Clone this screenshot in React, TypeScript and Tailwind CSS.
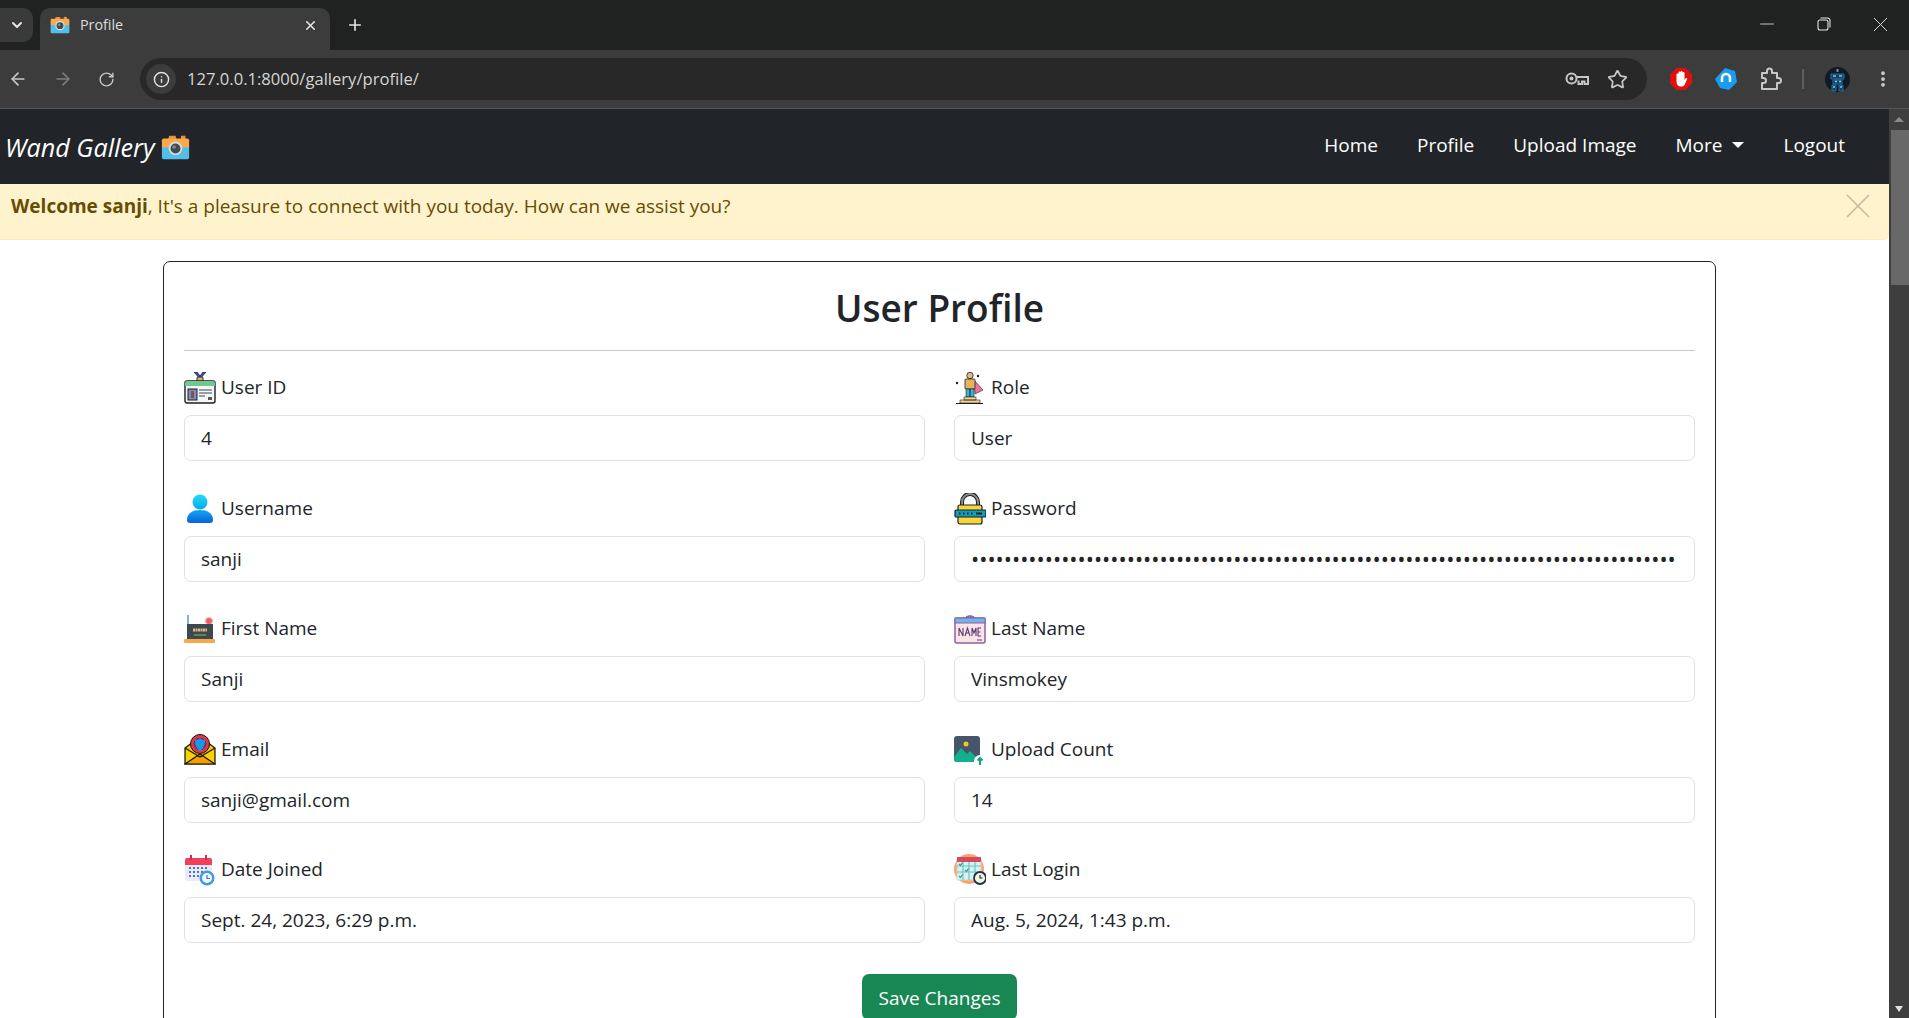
import { ArrowLeft, ArrowRight, ChevronDown, EllipsisVertical, Info, Minus, Plus, RotateCw, Star, X } from "lucide-react";
import type { ReactNode } from "react";

const font = { fontFamily: '"Open Sans", "Noto Sans", sans-serif' };

const CameraIcon = ({ size }: { size: number }) => (
  <svg width={size} height={size} viewBox="0 0 32 32">
    <path d="M9 3h7l1 4H8z" fill="#e8923a" />
    <path d="M22 3h5v4h-5z" fill="#e8923a" />
    <rect x="1" y="6" width="30" height="12" rx="2" fill="#f9a94b" />
    <path d="M1 16h30v11a2 2 0 0 1-2 2H3a2 2 0 0 1-2-2z" fill="#55bdea" />
    <circle cx="16" cy="17" r="7.500" fill="#d5dde0" />
    <circle cx="16" cy="17" r="5.500" fill="#3f4a52" />
    <circle cx="14.500" cy="15.500" r="2" fill="#7d8a93" />
  </svg>
);

const IdIcon = () => (
  <svg width="32" height="32" viewBox="0 0 32 32">
    <path d="M10 0l6 7 6-7h-3l-3 4-3-4z" fill="#3f51a5" stroke="#1d2450" strokeWidth="0.8" />
    <rect x="13" y="5" width="6" height="5" rx="1" fill="#e5b64a" stroke="#1d2450" />
    <rect x="1" y="9" width="30" height="22" rx="2" fill="#f4f6f8" stroke="#1c1f26" strokeWidth="1.400" />
    <path d="M1 14v-3a2 2 0 0 1 2-2h26a2 2 0 0 1 2 2v3z" fill="#6ec88f" />
    <rect x="4" y="17" width="9" height="11" fill="#7d8fc0" stroke="#1c1f26" />
    <rect x="7" y="19" width="3" height="7" fill="#8a4f3c" />
    <path d="M15 18h13M15 21h13M15 24h6" stroke="#7a808a" strokeWidth="1.500" />
    <rect x="24" y="25" width="4" height="3" fill="#555" />
  </svg>
);

const UserIcon = () => (
  <svg width="32" height="32" viewBox="0 0 32 32">
    <defs>
      <linearGradient id="userHead" x1="0" y1="0" x2="0" y2="1">
        <stop offset="0" stopColor="#1fdcf7" />
        <stop offset="1" stopColor="#0aa6ee" />
      </linearGradient>
      <linearGradient id="userBody" x1="0" y1="0" x2="0" y2="1">
        <stop offset="0" stopColor="#12a5f0" />
        <stop offset="1" stopColor="#0a62dc" />
      </linearGradient>
    </defs>
    <circle cx="16" cy="9" r="7.500" fill="url(#userHead)" />
    <path d="M3 27c0-7 6-10 13-10s13 3 13 10c0 2-1 3-3 3H6c-2 0-3-1-3-3z" fill="url(#userBody)" />
  </svg>
);

const HeroIcon = () => (
  <svg width="32" height="32" viewBox="0 0 32 32">
    <path d="M20 8l9 10-8 4z" fill="#f2709c" stroke="#1c1f26" strokeWidth="0.600" />
    <circle cx="16" cy="3.500" r="3.200" fill="#e8b48c" stroke="#1c1f26" strokeWidth="0.800" />
    <rect x="11" y="7" width="10" height="10" rx="1" fill="#e9b35c" stroke="#1c1f26" strokeWidth="0.800" />
    <path d="M12 17h4v8h-4zM16 17h4v8h-4z" fill="#39b3d8" stroke="#1c1f26" strokeWidth="0.600" />
    <path d="M10 25h12v3H10zM6 28h20v3H6z" fill="#f6d28e" stroke="#1c1f26" strokeWidth="0.600" />
    <path d="M2 31.500h27" stroke="#1c1f26" strokeWidth="1" />
    <circle cx="3" cy="11" r="1.200" fill="#1c1f26" />
    <circle cx="24" cy="4" r="1.200" fill="#1c1f26" />
  </svg>
);

const LockIcon = () => (
  <svg width="32" height="32" viewBox="0 0 32 32">
    <path d="M8 14V9a8 8 0 0 1 16 0v5" fill="none" stroke="#1c1f26" strokeWidth="4" />
    <path d="M8 14V9a8 8 0 0 1 16 0v5" fill="none" stroke="#8d8d8d" strokeWidth="2" />
    <rect x="4" y="12" width="24" height="19" rx="2" fill="#f7d63a" stroke="#1c1f26" strokeWidth="1.200" />
    <rect x="1" y="17" width="31" height="7" rx="1" fill="#119fb8" stroke="#1c1f26" strokeWidth="1.200" />
    <path d="M5 20.500h1.500M9 20.500h1.500M13 20.500h1.500M17 20.500h1.500M22 20.500h6" stroke="#10252b" strokeWidth="2" />
  </svg>
);

const NameBoardIcon = () => (
  <svg width="32" height="32" viewBox="0 0 32 32">
    <path d="M3 2h2v12H3z" fill="#7db5dc" />
    <circle cx="25" cy="8" r="3.500" fill="#ef5b68" stroke="#f8b9a8" />
    <rect x="3" y="11" width="26" height="15" fill="#3b4a50" />
    <path d="M9 17h14" stroke="#e3b878" strokeWidth="3" strokeDasharray="2 0.500" />
    <path d="M10 22h12" stroke="#8fb46a" strokeWidth="1" />
    <rect y="26" width="31" height="4" rx="1" fill="#f6a94a" />
  </svg>
);

const NameTagIcon = () => (
  <svg width="32" height="32" viewBox="0 0 32 32">
    <path d="M11 5c2-3 8-3 10 0z" fill="#4f9bd8" stroke="#7d5597" />
    <rect x="1" y="5" width="30" height="25" rx="2" fill="#fde4e4" stroke="#8e5fa5" strokeWidth="1.500" />
    <rect x="1" y="5" width="30" height="5" fill="#6db6e6" stroke="#8e5fa5" />
    <path d="M5 23v-8l4 8v-8M11 23l2.500-8 2.500 8M12 20h3M18 23v-8l2 5 2-5v8M27 15h-3v8h3M24 19h2.500" fill="none" stroke="#5b3a79" strokeWidth="1.100" />
    <path d="M23 27h5" stroke="#5b3a79" />
  </svg>
);

const MailIcon = () => (
  <svg width="32" height="32" viewBox="0 0 32 32">
    <path d="M1 14L16 3l15 11v16H1z" fill="#f7d200" stroke="#111" strokeWidth="1.200" />
    <path d="M1 30l15-10 15 10z" fill="#f59e00" stroke="#111" strokeWidth="1.200" />
    <path d="M1 14l15 9 15-9" fill="none" stroke="#111" strokeWidth="1.200" />
    <circle cx="16" cy="10" r="9.500" fill="#e23745" stroke="#111" strokeWidth="1" />
    <circle cx="16" cy="10" r="6.500" fill="#7e2f52" />
    <path d="M11 6c3 0 4-1 5-2 1 1 2 2 5 2 0 6-2 9-5 11-3-2-5-5-5-11z" fill="#119be8" />
  </svg>
);

const ImageUploadIcon = () => (
  <svg width="32" height="32" viewBox="0 0 32 32">
    <rect x="0" y="2" width="26" height="26" rx="3" fill="#47556b" />
    <circle cx="12" cy="10" r="2.500" fill="#f5c518" />
    <path d="M0 23l7-9 6 6 3-3 10 10v1H3a3 3 0 0 1-3-3z" fill="#12b08c" />
    <circle cx="26" cy="27" r="6" fill="#fff" />
    <path d="M26 31v-7M23.500 26.500l2.500-2.500 2.500 2.500" fill="none" stroke="#12a585" strokeWidth="2" />
  </svg>
);

const CalendarIcon = () => (
  <svg width="32" height="32" viewBox="0 0 32 32">
    <rect x="1" y="4" width="27" height="23" rx="2" fill="#e7ecf8" />
    <path d="M1 11V6a2 2 0 0 1 2-2h23a2 2 0 0 1 2 2v5z" fill="#f2405a" />
    <path d="M7 1v5M22 1v5" stroke="#c9324a" strokeWidth="2" />
    <path d="M5 14h2M9 14h2M13 14h2M17 14h2M21 14h2M5 18h2M9 18h2M13 18h2M17 18h2M5 22h2M9 22h2M13 22h2" stroke="#5e6db5" strokeWidth="2" />
    <circle cx="23" cy="24" r="7.500" fill="#3e9be8" />
    <circle cx="23" cy="24" r="5" fill="#f4f8ff" />
    <path d="M23 21v3.500h3" fill="none" stroke="#3e6fd0" strokeWidth="1.200" />
  </svg>
);

const LoginIcon = () => (
  <svg width="32" height="32" viewBox="0 0 32 32">
    <circle cx="15" cy="15" r="15" fill="#f9a36b" />
    <rect x="3" y="6" width="24" height="20" fill="#d9f0f2" stroke="#e0d2c8" />
    <rect x="3" y="3" width="24" height="5" fill="#d8495c" />
    <path d="M3 12h24M3 18h24M9 8v18M15 8v18M21 8v18" stroke="#68c7c5" strokeWidth="1.200" />
    <path d="M5 10l1.500 1.500 2-3M11 16l1.500 1.500 2-3M5 22l1.500 1.500 2-3" fill="none" stroke="#34a08a" strokeWidth="1.200" />
    <circle cx="26" cy="24" r="6" fill="#f4f6d8" stroke="#1f2f4f" strokeWidth="1.800" />
    <path d="M26 21v3h2.500" fill="none" stroke="#1f2f4f" strokeWidth="1.200" />
  </svg>
);

const Field = ({ icon, label, value, password }: { icon: ReactNode; label: string; value: string; password?: boolean }) => (
  <div>
    <label className="flex h-[43px] items-start gap-[5px] text-[#212529]">
      <span className="shrink-0">{icon}</span>
      <span className="text-[19px] leading-[30px]">{label}</span>
    </label>
    <input
      readOnly
      type={password ? "password" : "text"}
      value={value}
      className={
        password
          ? "block h-[46px] w-full rounded-[7px] border border-[#dee2e6] bg-white px-[16px] text-[21.800px] text-[#212529] outline-none"
          : "block h-[46px] w-full rounded-[7px] border border-[#dee2e6] bg-white px-[16px] text-[19px] text-[#212529] outline-none"
      }
      style={font}
    />
  </div>
);

export default function App() {
  return (
    <div className="flex h-screen w-full flex-col overflow-hidden bg-white" style={font}>
      {/* browser tabs */}
      <div className="flex h-[50px] shrink-0 bg-[#202121]">
        <div className="mt-[8px] ml-[-8px] flex h-[34px] w-[41px] items-center justify-center rounded-[10px] bg-[#3a3a3a] pl-[8px] text-[#e3e3e3]">
          <ChevronDown size={16} strokeWidth={3} />
        </div>
        <div className="mt-[8px] ml-[7px] flex h-[42px] w-[290px] items-center rounded-t-[10px] bg-[#3c3c3c] pr-[12px] pb-[8px] pl-[10px]">
          <CameraIcon size={20} />
          <span className="ml-[10px] flex-1 text-[14.300px] text-[#dedede]">Profile</span>
          <X size={15} strokeWidth={2.500} className="text-[#e3e3e3]" />
        </div>
        <div className="mt-[8px] ml-[16px] flex h-[34px] items-center text-[#e3e3e3]">
          <Plus size={18} strokeWidth={2.200} />
        </div>
        <div className="flex-1" />
        <div className="flex h-[48px] items-center text-[#e3e3e3]">
          <span className="flex w-[57px] justify-center">
            <Minus size={22} strokeWidth={0.900} />
          </span>
          <span className="flex w-[57px] justify-center">
            <svg width="14" height="14" viewBox="0 0 14 14" fill="none" stroke="currentColor" strokeWidth="1.100">
              <rect x="1" y="3" width="10" height="10" rx="2" />
              <path d="M3.500 1h7a2.500 2.500 0 0 1 2.500 2.500v7" />
            </svg>
          </span>
          <span className="flex w-[57px] justify-center">
            <X size={25} strokeWidth={0.900} />
          </span>
        </div>
      </div>
      {/* browser toolbar */}
      <div className="flex h-[59px] shrink-0 items-center border-b border-[#565656] bg-[#3c3c3c]">
        <div className="flex w-[140px] items-center gap-[25px] pl-[8px] text-[#c7c7c7]">
          <ArrowLeft size={20} strokeWidth={2} />
          <ArrowRight size={20} strokeWidth={2} className="text-[#7d7d7d]" />
          <RotateCw size={17} strokeWidth={2} />
        </div>
        <div className="flex h-[42px] w-[1507px] items-center rounded-full bg-[#282828] pl-[6px]">
          <span className="flex h-[30px] w-[30px] items-center justify-center rounded-full bg-[#3c3c3c] text-[#e3e3e3]">
            <Info size={17} strokeWidth={2} />
          </span>
          <span className="ml-[11px] flex-1 pt-[1px] text-[16.600px] text-[#d5d5d5]">127.0.0.1:8000/gallery/profile/</span>
          <svg width="24" height="14" viewBox="0 0 24 14" fill="none" stroke="#c7c7c7" strokeWidth="2" className="mr-[18px]">
            <circle cx="6.500" cy="6.500" r="5" />
            <circle cx="6.500" cy="6.500" r="1" />
            <path d="M11.500 5H23v7h-3.500V9.500H17V12h-3.500V8.500" />
          </svg>
          <Star size={21} strokeWidth={2} className="mr-[19px] text-[#c7c7c7]" />
        </div>
        <div className="ml-[23px] flex items-center">
          <svg width="22" height="22" viewBox="0 0 22 22">
            <path d="M6.500 0h9L22 6.500v9L15.500 22h-9L0 15.500v-9z" fill="#e01010" />
            <path d="M6.500 11V6.500a1 1 0 0 1 2 0V4.500a1 1 0 0 1 2 0V4a1 1 0 0 1 2 0v1a1 1 0 0 1 2 0v7l1-1.500c1-1 2 0 1.500 1L14.500 17c-1 1-2 1.500-3.500 1.500-3 0-4.500-2-4.500-5z" fill="#fff" />
          </svg>
          <svg width="22" height="22" viewBox="0 0 22 22" className="ml-[23px]">
            <path d="M10 0l10 3 2 11-8 8-9-2-5-9z" fill="#1a9cf0" />
            <path d="M7 14V10a4 4 0 0 1 8 0v4" fill="none" stroke="#fff" strokeWidth="2.500" />
          </svg>
          <svg width="22" height="24" viewBox="0 0 22 24" fill="none" stroke="#c7c7c7" strokeWidth="2" className="ml-[23px]">
            <path d="M2 6h5V4a2.500 2.500 0 0 1 5 0v2h5v5h1.500a2.500 2.500 0 0 1 0 5H17v6H2v-6h1.500a2.500 2.500 0 0 0 0-5H2z" strokeLinejoin="round" />
          </svg>
          <div className="ml-[20px] h-[20px] w-[2px] bg-[#5f5f5f]" />
          <svg width="25" height="25" viewBox="0 0 25 25" className="ml-[21px]">
            <circle cx="12.500" cy="12.500" r="12.500" fill="#0e1a26" />
            <path d="M12.500 2v3" stroke="#8a8f96" strokeWidth="2" />
            <path d="M6 7h13v5H6zM8 13h9v4H8zM7 18h4v6H7zM14 18h4v6h-4z" stroke="#2a6f9e" strokeWidth="1" fill="#17405f" />
            <path d="M8 9h3M14 9h3M10 14.500h2M14 14.500h2M8 20h2M15 20h2" stroke="#6fd0f8" strokeWidth="1.600" />
          </svg>
          <EllipsisVertical size={20} strokeWidth={2.500} className="ml-[23px] text-[#d0d0d0]" />
        </div>
      </div>

      <div className="flex min-h-0 flex-1">
        <main className="min-w-0 flex-1 overflow-hidden">
          {/* site navbar */}
          <nav className="flex h-[75px] items-center justify-between bg-[#212529] pr-[44px] pl-[5px] text-white">
            <a className="flex items-center gap-[6px] pt-[2px] text-[25.200px] italic">
              Wand Gallery
              <CameraIcon size={29} />
            </a>
            <ul className="flex items-center gap-[39px] pb-[3px] text-[19px]">
              <li>Home</li>
              <li>Profile</li>
              <li>Upload Image</li>
              <li className="flex items-center gap-[10px]">
                More
                <span className="h-0 w-0 border-x-[6px] border-t-[6px] border-x-transparent border-t-white" />
              </li>
              <li>Logout</li>
            </ul>
          </nav>

          <div className="flex h-[56px] items-center justify-between rounded-br-[6px] border-b border-[#ffecb5] bg-[#fff3cd] pr-[10px] pb-[10px] pl-[11px] text-[19px] text-[#664d03]">
            <p>
              <strong className="font-bold">Welcome sanji</strong>, It's a pleasure to connect with you today. How can we assist you?
            </p>
            <X size={42} strokeWidth={1} className="mt-[-4px] mb-[-2px] text-[#c7bc9e]" />
          </div>

          <section className="mt-[21px] ml-[163px] w-[1553px] rounded-[7px] border border-[#212529] px-[20px] pb-[60px]">
            <h1 className="mt-[20px] text-center text-[37px] leading-[52px] font-semibold text-[#212529]">User Profile</h1>
            <hr className="mt-[16px] border-[#c9c9c9]" />
            <div className="mt-[21px] grid grid-cols-2 gap-x-[29px] gap-y-[31.600px]">
              <Field icon={<IdIcon />} label="User ID" value="4" />
              <Field icon={<HeroIcon />} label="Role" value="User" />
              <Field icon={<UserIcon />} label="Username" value="sanji" />
              <Field icon={<LockIcon />} label="Password" value={"x".repeat(86)} password />
              <Field icon={<NameBoardIcon />} label="First Name" value="Sanji" />
              <Field icon={<NameTagIcon />} label="Last Name" value="Vinsmokey" />
              <Field icon={<MailIcon />} label="Email" value="sanji@gmail.com" />
              <Field icon={<ImageUploadIcon />} label="Upload Count" value="14" />
              <Field icon={<CalendarIcon />} label="Date Joined" value="Sept. 24, 2023, 6:29 p.m." />
              <Field icon={<LoginIcon />} label="Last Login" value="Aug. 5, 2024, 1:43 p.m." />
            </div>
            <div className="mt-[31px] flex justify-center">
              <button type="button" className="h-[46px] w-[155px] rounded-[7px] bg-[#198754] pt-[2px] text-[19px] text-white">
                Save Changes
              </button>
            </div>
          </section>
        </main>

        {/* scrollbar */}
        <div className="flex w-[20px] shrink-0 flex-col items-center bg-[#3e3e3e]">
          <span className="mt-[8px] h-0 w-0 border-x-[5px] border-b-[5px] border-x-transparent border-b-[#8a8a8a]" />
          <div className="mt-[8px] h-[155px] w-[18px] self-end bg-[#686868]" />
          <div className="flex-1" />
          <span className="mb-[6px] h-0 w-0 border-x-[4px] border-t-[6px] border-x-transparent border-t-[#e0e0e0]" />
        </div>
      </div>
    </div>
  );
}
